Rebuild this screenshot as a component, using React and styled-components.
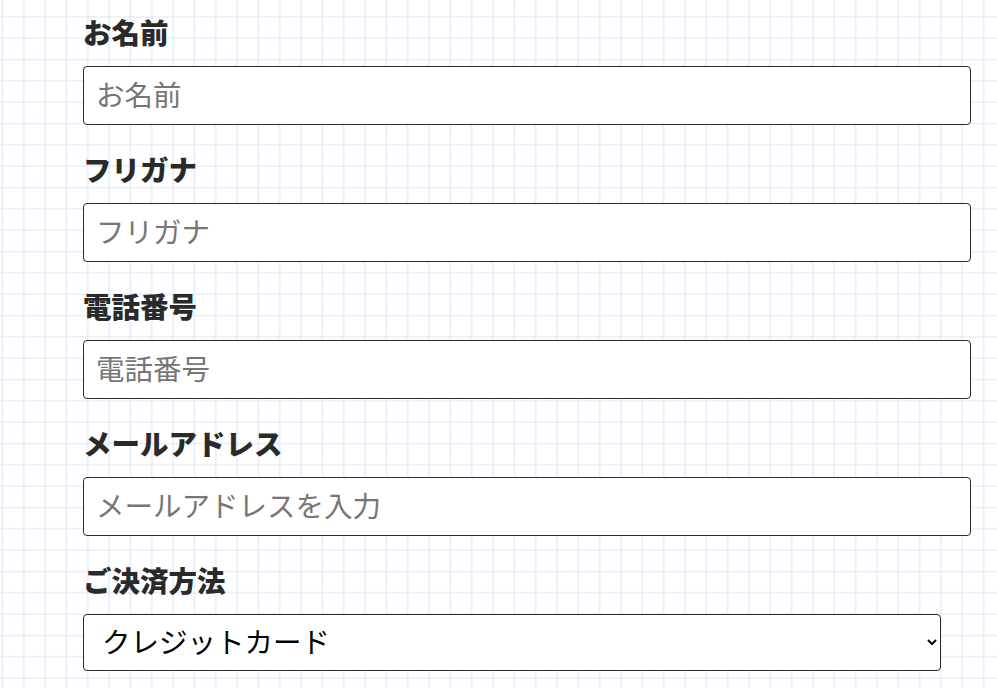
import React from "react";
import styled, { createGlobalStyle } from "styled-components";

const GlobalStyle = createGlobalStyle`
  html, body {
    margin: 0;
    padding: 0;
  }
  body {
    background-color: #ffffff;
    background-image:
      linear-gradient(to right, rgba(215, 222, 245, 0.45) 1.5px, transparent 1.5px),
      linear-gradient(to bottom, rgba(215, 225, 242, 0.45) 1.5px, transparent 1.5px);
    background-size: 21.33px 21.33px;
    background-position: 1.5px 16px;
    min-height: 688px;
    font-family: "Noto Sans CJK JP", "Noto Sans", sans-serif;
  }
`;

const Form = styled.form`
  display: flex;
  flex-direction: column;
  gap: 24px;
  padding: 12px 0 0 83px;
  width: 888px;
`;

const Field = styled.div`
  display: flex;
  flex-direction: column;
  gap: 14px;
`;

const Label = styled.label`
  font-size: 28.5px;
  line-height: 40px;
  font-weight: 900;
  color: #2a2a2a;
`;

const Input = styled.input`
  box-sizing: border-box;
  width: 100%;
  height: 59px;
  padding: 0 12px 4px;
  border: 1px solid #2c2c2c;
  border-radius: 4px;
  background: #fff;
  font-family: inherit;
  font-size: 28.5px;
  color: #222;
  outline: none;

  &::placeholder {
    color: #767676;
  }
`;

const Select = styled.select`
  box-sizing: border-box;
  width: 858px;
  height: 57px;
  padding: 0 14px 4px;
  border: 1px solid #2c2c2c;
  border-radius: 4px;
  background: #fff;
  font-family: inherit;
  font-size: 28.5px;
  color: #000;
  outline: none;
`;

const fields = [
  { label: "お名前", placeholder: "お名前", type: "text" },
  { label: "フリガナ", placeholder: "フリガナ", type: "text" },
  { label: "電話番号", placeholder: "電話番号", type: "tel" },
  { label: "メールアドレス", placeholder: "メールアドレスを入力", type: "email" },
];

export default function App() {
  return (
    <>
      <GlobalStyle />
      <Form onSubmit={(e) => e.preventDefault()}>
        {fields.map((f) => (
          <Field key={f.label}>
            <Label>{f.label}</Label>
            <Input type={f.type} placeholder={f.placeholder} />
          </Field>
        ))}
        <Field>
          <Label>ご決済方法</Label>
          <Select defaultValue="credit">
            <option value="credit">クレジットカード</option>
            <option value="bank">銀行振込</option>
            <option value="cod">代金引換</option>
          </Select>
        </Field>
      </Form>
    </>
  );
}
